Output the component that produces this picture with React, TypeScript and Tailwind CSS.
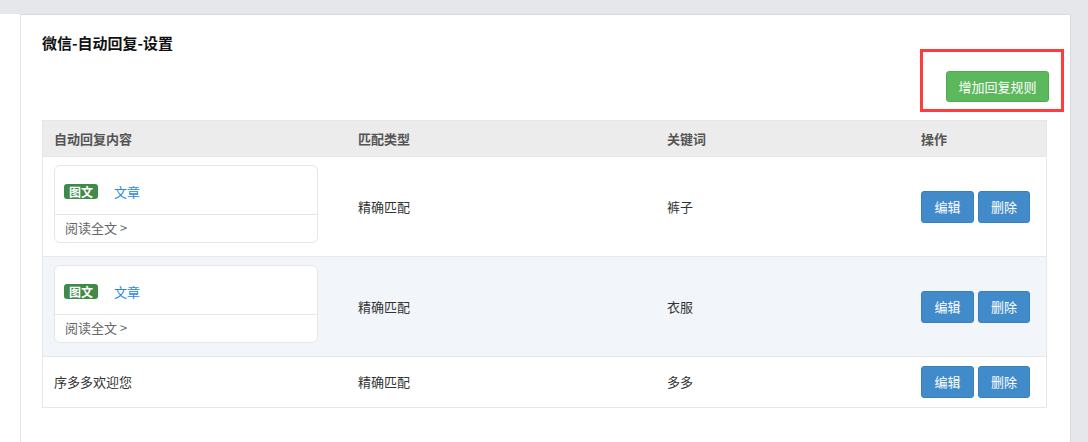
import React from 'react';

interface Rule {
  kind: 'news' | 'text';
  text: string;
  match: string;
  keyword: string;
}

const rules: Rule[] = [
  { kind: 'news', text: '文章', match: '精确匹配', keyword: '裤子' },
  { kind: 'news', text: '文章', match: '精确匹配', keyword: '衣服' },
  { kind: 'text', text: '序多多欢迎您', match: '精确匹配', keyword: '多多' },
];

const cols = 'grid grid-cols-[304px_309px_254px_1fr]';

function NewsCard({ title }: { title: string }) {
  return (
    <div className="w-[264px] rounded-[6px] border border-[#e6e6e6] bg-white">
      <div className="flex h-[48px] items-center pl-[9px] pt-[4px]">
        <span className="inline-flex h-[15px] w-[34px] items-center justify-center rounded-[3px] bg-[#3e8a47] text-[12px] font-bold leading-none text-white">
          图文
        </span>
        <span className="ml-[16px] text-[13px] text-[#2a8ae2]">{title}</span>
      </div>
      <div className="flex h-[28px] items-center border-t border-[#e8e8e8] pl-[10px] text-[13px] text-[#666]">
        阅读全文 &gt;
      </div>
    </div>
  );
}

function ActionButtons() {
  return (
    <div className="flex gap-[4px]">
      <button className="h-[32px] w-[53px] rounded-[3px] border border-[#3a7fc0] bg-[#428bca] text-[13px] text-white">
        编辑
      </button>
      <button className="h-[32px] w-[52px] rounded-[3px] border border-[#3a7fc0] bg-[#428bca] text-[13px] text-white">
        删除
      </button>
    </div>
  );
}

export default function App() {
  return (
    <div
      className="flex h-[442px] w-full flex-col bg-[#e6e7eb] pt-[14px] text-[#333]"
      style={{ fontFamily: '"Noto Sans CJK SC", "Noto Sans", sans-serif' }}
    >
      <div className="flex flex-1">
        <div className="w-[21px] border-r border-[#e3e4e8] bg-white" />
        <div className="w-[1050px] border-t border-r border-[#d9dadd] bg-white pl-[21px] pr-[23px] pt-[18px]">
          <h1 className="text-[15px] font-bold leading-[20px] text-[#111]">微信-自动回复-设置</h1>

          <div className="-mr-[2px] mt-[18px] flex justify-end">
            <div className="relative">
              <button className="h-[31px] w-[103px] rounded-[3px] border border-[#4cae4c] bg-[#5cb85c] text-[13px] text-white">
                增加回复规则
              </button>
              <div className="pointer-events-none absolute -bottom-[10px] -left-[26px] -right-[15px] -top-[22px] border-[3px] border-[#ff3b3b]" />
            </div>
          </div>

          <div className="mt-[18px] border border-[#e7e7e7] text-[13px]">
            <div className={`${cols} h-[35px] items-center bg-[#ececec] font-semibold text-[#555]`}>
              <div className="pl-[11px]">自动回复内容</div>
              <div className="pl-[11px]">匹配类型</div>
              <div className="pl-[11px]">关键词</div>
              <div className="pl-[11px]">操作</div>
            </div>
            {rules.map((r, i) => (
              <div
                key={i}
                className={`${cols} items-center border-t border-[#e8e8e8] ${
                  r.kind === 'news' ? 'h-[100px]' : 'h-[51px]'
                } ${i === 1 ? 'bg-[#f2f6fa]' : 'bg-white'}`}
              >
                <div className="pl-[11px]">
                  {r.kind === 'news' ? (
                    <div className="pb-[6px]">
                      <NewsCard title={r.text} />
                    </div>
                  ) : (
                    <span>{r.text}</span>
                  )}
                </div>
                <div className="pl-[11px]">{r.match}</div>
                <div className="pl-[11px]">{r.keyword}</div>
                <div className="pl-[11px]">
                  <ActionButtons />
                </div>
              </div>
            ))}
          </div>
        </div>
      </div>
    </div>
  );
}
